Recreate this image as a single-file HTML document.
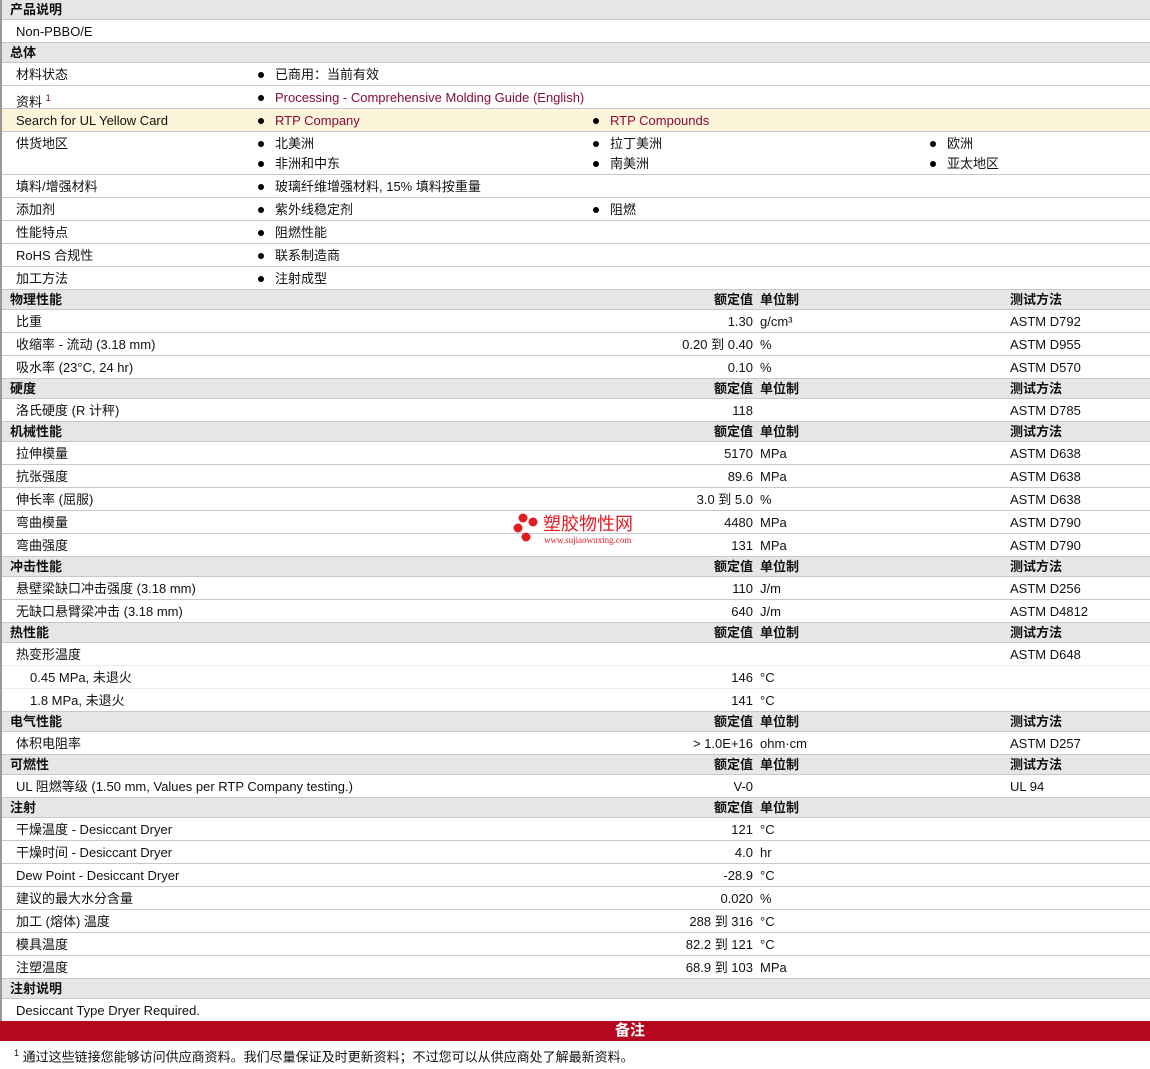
<!DOCTYPE html>
<html><head><meta charset="utf-8"><style>
*{margin:0;padding:0;box-sizing:border-box}
body{width:1150px;height:1061px;overflow:hidden;background:#fff;font-family:"Liberation Sans","Noto Sans CJK SC",sans-serif;font-size:13px;color:#111;position:relative}
.wrap{border-left:2px solid #999;position:relative}
.r{position:relative;height:23px;border-bottom:1px solid #c8c8c8;line-height:24px}
.h{position:relative;height:20px;border-bottom:1px solid #c8c8c8;line-height:19px;background:#e6e6e6;font-weight:bold}
.r span,.h span{position:absolute;top:0;white-space:nowrap}
.l{left:14px}.hl{left:8px}
.b1{left:256px}.b2{left:591px}.b3{left:928px}
.b1:before,.b2:before,.b3:before{content:"";display:inline-block;width:6px;height:6px;border-radius:3px;background:#000;margin-right:11px;vertical-align:1px}
.v{right:397px;text-align:right}.u{left:758px}.m{left:1008px}
.lk{color:#8b0a3a}
.y{background:#fbf6d9}
.tall{height:43px}
</style></head><body>
<div class="wrap">
<div class="h"><span class="hl">产品说明</span></div>
<div class="r"><span class="l">Non-PBBO/E</span></div>
<div class="h"><span class="hl">总体</span></div>
<div class="r"><span class="l">材料状态</span><span class="b1">已商用：当前有效</span></div>
<div class="r"><span class="l">资料 <sup style="font-size:9px;color:#603">1</sup></span><span class="b1 lk">Processing - Comprehensive Molding Guide (English)</span></div>
<div class="r y"><span class="l">Search for UL Yellow Card</span><span class="b1 lk">RTP Company</span><span class="b2 lk">RTP Compounds</span></div>
<div class="r tall"><span class="l">供货地区</span><span class="b1">北美洲</span><span class="b2">拉丁美洲</span><span class="b3">欧洲</span><span class="b1" style="top:20px">非洲和中东</span><span class="b2" style="top:20px">南美洲</span><span class="b3" style="top:20px">亚太地区</span></div>
<div class="r"><span class="l">填料/增强材料</span><span class="b1">玻璃纤维增强材料, 15% 填料按重量</span></div>
<div class="r"><span class="l">添加剂</span><span class="b1">紫外线稳定剂</span><span class="b2">阻燃</span></div>
<div class="r"><span class="l">性能特点</span><span class="b1">阻燃性能</span></div>
<div class="r"><span class="l">RoHS 合规性</span><span class="b1">联系制造商</span></div>
<div class="r"><span class="l">加工方法</span><span class="b1">注射成型</span></div>
<div class="h"><span class="hl">物理性能</span><span class="v">额定值</span><span class="u">单位制</span><span class="m">测试方法</span></div>
<div class="r"><span class="l">比重</span><span class="v">1.30</span><span class="u">g/cm³</span><span class="m">ASTM D792</span></div>
<div class="r"><span class="l">收缩率 - 流动 (3.18 mm)</span><span class="v">0.20 到 0.40</span><span class="u">%</span><span class="m">ASTM D955</span></div>
<div class="r"><span class="l">吸水率 (23°C, 24 hr)</span><span class="v">0.10</span><span class="u">%</span><span class="m">ASTM D570</span></div>
<div class="h"><span class="hl">硬度</span><span class="v">额定值</span><span class="u">单位制</span><span class="m">测试方法</span></div>
<div class="r"><span class="l">洛氏硬度 (R 计秤)</span><span class="v">118</span><span class="m">ASTM D785</span></div>
<div class="h"><span class="hl">机械性能</span><span class="v">额定值</span><span class="u">单位制</span><span class="m">测试方法</span></div>
<div class="r"><span class="l">拉伸模量</span><span class="v">5170</span><span class="u">MPa</span><span class="m">ASTM D638</span></div>
<div class="r"><span class="l">抗张强度</span><span class="v">89.6</span><span class="u">MPa</span><span class="m">ASTM D638</span></div>
<div class="r"><span class="l">伸长率 (屈服)</span><span class="v">3.0 到 5.0</span><span class="u">%</span><span class="m">ASTM D638</span></div>
<div class="r"><span class="l">弯曲模量</span><span class="v">4480</span><span class="u">MPa</span><span class="m">ASTM D790</span>
<span style="left:510px;top:2px;line-height:normal"><svg width="26" height="30" style="vertical-align:top"><circle cx="11" cy="5" r="4.5" fill="#e51b24"/><circle cx="21" cy="9" r="4.5" fill="#e51b24"/><circle cx="6" cy="15" r="4.5" fill="#e51b24"/><circle cx="14" cy="24" r="4.5" fill="#e51b24"/></svg></span>
<span style="left:541px;top:4px;line-height:19px;color:#e51b24;font-size:18px">塑胶物性网</span>
<span style="left:542px;top:24px;line-height:10px;color:#e51b24;font-size:9px;font-family:'Liberation Serif',serif">www.sujiaowuxing.com</span></div>
<div class="r"><span class="l">弯曲强度</span><span class="v">131</span><span class="u">MPa</span><span class="m">ASTM D790</span></div>
<div class="h"><span class="hl">冲击性能</span><span class="v">额定值</span><span class="u">单位制</span><span class="m">测试方法</span></div>
<div class="r"><span class="l">悬壁梁缺口冲击强度 (3.18 mm)</span><span class="v">110</span><span class="u">J/m</span><span class="m">ASTM D256</span></div>
<div class="r"><span class="l">无缺口悬臂梁冲击 (3.18 mm)</span><span class="v">640</span><span class="u">J/m</span><span class="m">ASTM D4812</span></div>
<div class="h"><span class="hl">热性能</span><span class="v">额定值</span><span class="u">单位制</span><span class="m">测试方法</span></div>
<div class="r" style="border-color:#eee"><span class="l">热变形温度</span><span class="m">ASTM D648</span></div>
<div class="r" style="border-color:#eee"><span class="l" style="left:28px">0.45 MPa, 未退火</span><span class="v">146</span><span class="u">°C</span></div>
<div class="r"><span class="l" style="left:28px">1.8 MPa, 未退火</span><span class="v">141</span><span class="u">°C</span></div>
<div class="h"><span class="hl">电气性能</span><span class="v">额定值</span><span class="u">单位制</span><span class="m">测试方法</span></div>
<div class="r"><span class="l">体积电阻率</span><span class="v">&gt; 1.0E+16</span><span class="u">ohm·cm</span><span class="m">ASTM D257</span></div>
<div class="h"><span class="hl">可燃性</span><span class="v">额定值</span><span class="u">单位制</span><span class="m">测试方法</span></div>
<div class="r"><span class="l">UL 阻燃等级 (1.50 mm, Values per RTP Company testing.)</span><span class="v">V-0</span><span class="m">UL 94</span></div>
<div class="h"><span class="hl">注射</span><span class="v">额定值</span><span class="u">单位制</span></div>
<div class="r"><span class="l">干燥温度 - Desiccant Dryer</span><span class="v">121</span><span class="u">°C</span></div>
<div class="r"><span class="l">干燥时间 - Desiccant Dryer</span><span class="v">4.0</span><span class="u">hr</span></div>
<div class="r"><span class="l">Dew Point - Desiccant Dryer</span><span class="v">-28.9</span><span class="u">°C</span></div>
<div class="r"><span class="l">建议的最大水分含量</span><span class="v">0.020</span><span class="u">%</span></div>
<div class="r"><span class="l">加工 (熔体) 温度</span><span class="v">288 到 316</span><span class="u">°C</span></div>
<div class="r"><span class="l">模具温度</span><span class="v">82.2 到 121</span><span class="u">°C</span></div>
<div class="r"><span class="l">注塑温度</span><span class="v">68.9 到 103</span><span class="u">MPa</span></div>
<div class="h"><span class="hl">注射说明</span></div>
<div class="r" style="border:0;height:22px"><span class="l">Desiccant Type Dryer Required.</span></div>
</div>
<div style="height:20px;background:#b5081f;color:#fff;font-weight:bold;font-size:15px;line-height:20px;text-align:center;padding-left:110px">备注</div>
<div style="height:20px;line-height:24px;padding-left:14px;font-size:13px"><sup style="font-size:9px">1</sup> 通过这些链接您能够访问供应商资料。我们尽量保证及时更新资料；不过您可以从供应商处了解最新资料。</div>
</body></html>
